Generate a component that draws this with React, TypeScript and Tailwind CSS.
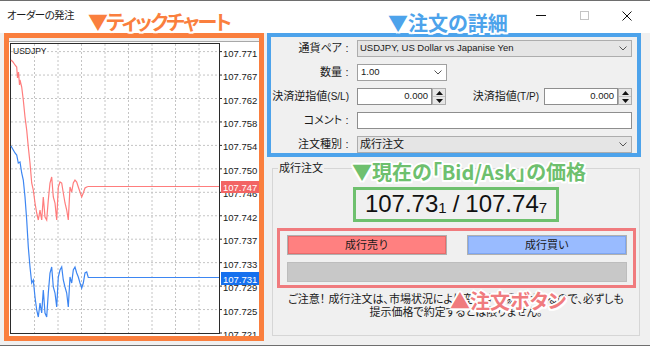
import React from 'react';

// white halo around the annotation captions
const ANNOT =
  "absolute whitespace-nowrap font-['Noto_Sans_CJK_JP',sans-serif] font-bold text-[20px] leading-[22px] [font-feature-settings:'palt'] [text-shadow:2px_0_0_#fff,-2px_0_0_#fff,0_2px_0_#fff,0_-2px_0_#fff,1.5px_1.5px_0_#fff,-1.5px_1.5px_0_#fff,1.5px_-1.5px_0_#fff,-1.5px_-1.5px_0_#fff]";

const PRICES = [
  '107.771', '107.767', '107.762', '107.758', '107.754', '107.750', '107.746',
  '107.742', '107.737', '107.733', '107.729', '107.725', '107.721',
];

const ASK_POINTS: [number, number][] = [
  [11, 60], [13, 62], [15, 65], [16.7, 67], [17.5, 78], [18.5, 72], [19.5, 85], [20, 80],
  [21.7, 87], [23.3, 100], [25, 117], [26.7, 130], [28.3, 147], [30, 163], [31.7, 183],
  [33.3, 190], [35, 203], [36.7, 213], [38.3, 220], [40, 210], [41.7, 220], [43.3, 197],
  [45, 217], [46.7, 220], [48.3, 200], [50, 183], [51.7, 177], [53.3, 197], [55, 203],
  [56.7, 220], [58.3, 187], [60, 182], [61.7, 183], [63.3, 193], [65, 203], [66.7, 210],
  [68.3, 220], [70, 187], [71.7, 192], [73.3, 183], [75, 180], [76.7, 182], [78.3, 187],
  [80, 192], [81.7, 197], [83.3, 193], [85, 188], [86.7, 187], [88.3, 186.5], [219, 186.5],
];

const BID_POINTS: [number, number][] = [
  [11, 146], [13.3, 150], [15, 153], [16.7, 155], [18.3, 163], [20, 162], [21.7, 173],
  [23.3, 180], [25, 197], [26.7, 220], [28.3, 247], [30, 267], [31.7, 283], [33.3, 280],
  [35, 297], [36.7, 310], [38.3, 317], [40, 303], [41.7, 313], [43.3, 290], [45, 313],
  [46.7, 317], [48.3, 293], [50, 273], [51.7, 267], [53.3, 287], [55, 293], [56.7, 307],
  [58.3, 277], [60, 270], [61.7, 267], [63.3, 280], [65, 287], [66.7, 293], [68.3, 307],
  [70, 277], [71.7, 283], [73.3, 270], [75, 267], [76.7, 273], [78.3, 277], [80, 283],
  [81.7, 288], [83.3, 283], [85, 273], [86.7, 272], [88.3, 277.5], [219, 277.5],
];

const toPoints = (pts: [number, number][]) => pts.map(([x, y]) => `${x},${y}`).join(' ');

function TickChart() {
  const gridY = PRICES.map((_, i) => 51.6 + i * 23.45);
  const gridX = Array.from({ length: 8 }, (_, i) => 34.5 + i * 23.5);

  return (
    <svg width="250" height="298" viewBox="9 38 250 298" className="block">
      <rect x="9" y="38" width="250" height="298" fill="#f0f0f0" />
      <rect x="9" y="41" width="250" height="295" fill="#ffffff" />
      <line x1="9" y1="41.5" x2="259" y2="41.5" stroke="#a8a8a8" />

      {gridY.slice(0, 12).map((y) => (
        <line key={y} x1="11" y1={y} x2="219" y2={y} stroke="#c4c4c4" strokeDasharray="2 2" />
      ))}
      {gridX.map((x) => (
        <line key={x} x1={x} y1="44" x2={x} y2="333" stroke="#c4c4c4" strokeDasharray="2 2" />
      ))}
      <rect x="10.5" y="43.5" width="209" height="290" fill="none" stroke="#2b2b2b" />

      {gridY.map((y, i) => (
        <g key={PRICES[i]}>
          <line x1="219" y1={y} x2="222" y2={y} stroke="#2b2b2b" />
          <text x="223" y={y + 1.5} fontSize="9.5" fill="#1a1a1a" dominantBaseline="central" fontFamily="Liberation Sans">
            {PRICES[i]}
          </text>
        </g>
      ))}

      <text x="13" y="50.5" fontSize="8.5" fill="#1a1a1a" dominantBaseline="central" fontFamily="Liberation Sans">
        USDJPY
      </text>

      <polyline points={toPoints(ASK_POINTS)} fill="none" stroke="#ff7d7d" strokeWidth="1.2" />
      <polyline points={toPoints(BID_POINTS)} fill="none" stroke="#3d86f2" strokeWidth="1.2" />

      <rect x="221" y="181" width="38" height="12" fill="#f26464" />
      <text x="223" y="187.5" fontSize="9.5" fill="#ffffff" dominantBaseline="central" fontFamily="Liberation Sans">
        107.747
      </text>
      <rect x="221" y="272" width="38" height="13" fill="#1570ee" />
      <text x="223" y="279" fontSize="9.5" fill="#ffffff" dominantBaseline="central" fontFamily="Liberation Sans">
        107.731
      </text>
    </svg>
  );
}

function Chevron() {
  return (
    <svg width="8" height="5" viewBox="0 0 8 5" className="shrink-0">
      <path d="M0.5 0.5 L4 4 L7.5 0.5" fill="none" stroke="#555" strokeWidth="1" />
    </svg>
  );
}

function Spinner() {
  return (
    <div className="flex h-full w-[14px] shrink-0 flex-col border border-[#adadad] bg-[#e6e6e6]">
      <div className="flex flex-1 items-center justify-center border-b border-[#c4c4c4]">
        <svg width="7" height="4" viewBox="0 0 7 4"><path d="M0 4 L3.5 0 L7 4Z" fill="#111" /></svg>
      </div>
      <div className="flex flex-1 items-center justify-center">
        <svg width="7" height="4" viewBox="0 0 7 4"><path d="M0 0 L7 0 L3.5 4Z" fill="#111" /></svg>
      </div>
    </div>
  );
}

function Label({ children, colon = true }: { children: React.ReactNode; colon?: boolean }) {
  return (
    <div className="flex w-[81px] shrink-0 items-center justify-end text-[11px] [font-feature-settings:'palt']">
      <span>{children}</span>
      {colon ? <span className="w-[10px] text-center">:</span> : <span className="w-[3px]" />}
    </div>
  );
}

export default function App() {
  return (
    <div className="relative flex h-[346px] w-[650px] flex-col overflow-hidden border-y border-[#6e6e6e] bg-[#f0f0f0] font-['Liberation_Sans','Noto_Sans_CJK_JP',sans-serif] text-[#1a1a1a]">
      {/* Title bar */}
      <div className="flex h-[32px] shrink-0 items-center bg-white pb-[3px] pl-[7px] pr-[18px]">
        <span className="text-[10.5px] tracking-[-0.6px] [font-feature-settings:'palt']">オーダーの発注</span>
        <div className="ml-auto h-px w-[10px] bg-[#111]" />
        <div className="ml-[34px] h-[9px] w-[9px] border border-[#c4c4c4]" />
        <svg className="ml-[33px]" width="10" height="10" viewBox="0 0 10 10">
          <path d="M0.5 0.5 L9.5 9.5 M9.5 0.5 L0.5 9.5" stroke="#111" strokeWidth="1" />
        </svg>
      </div>

      <div className="flex flex-1 pl-[4px]">
        {/* Tick chart */}
        <div className="h-[308px] w-[260px] border-[5px] border-[#fa7f3e]">
          <TickChart />
        </div>

        <div className="ml-[3px] flex w-[374px] flex-col">
          {/* Order details */}
          <div className="flex h-[124px] flex-col gap-[7px] border-4 border-[#4da3eb] pr-[5px] pt-[3px]">
            <div className="flex h-[17px] items-center">
              <Label>通貨ペア</Label>
              <div className="ml-[5px] flex h-full flex-1 items-center border border-[#adadad] bg-[#e5e5e5] pl-[2px] pr-[4px]">
                <span className="flex-1 text-[9.5px]">USDJPY, US Dollar vs Japanise Yen</span>
                <Chevron />
              </div>
            </div>
            <div className="flex h-[17px] items-center">
              <Label>数量</Label>
              <div className="ml-[5px] flex h-full w-[90px] items-center border border-[#a0a0a0] bg-white pl-[3px] pr-[4px]">
                <span className="flex-1 text-[9.5px]">1.00</span>
                <Chevron />
              </div>
            </div>
            <div className="flex h-[17px] items-center">
              <Label colon={false}>
                決済逆指値<span className="text-[10px]">(S/L)</span>
              </Label>
              <div className="ml-[5px] flex h-full w-[75px] items-center justify-end border border-[#8e8e8e] bg-white pr-[3px] text-[9.5px]">
                0.000
              </div>
              <Spinner />
              <div className="flex flex-1 justify-end text-[11px]">
                <span>
                  決済指値<span className="text-[10px]">(T/P)</span>
                </span>
              </div>
              <div className="ml-[5px] flex h-full w-[74px] items-center justify-end border border-[#8e8e8e] bg-white pr-[3px] text-[9.5px]">
                0.000
              </div>
              <Spinner />
            </div>
            <div className="flex h-[17px] items-center">
              <Label>コメント</Label>
              <div className="ml-[5px] h-full flex-1 border border-[#8e8e8e] bg-white" />
            </div>
            <div className="flex h-[17px] items-center">
              <Label>注文種別</Label>
              <div className="ml-[5px] flex h-full flex-1 items-center border border-[#adadad] bg-[#e5e5e5] pl-[2px] pr-[4px]">
                <span className="flex-1 text-[11px]">成行注文</span>
                <Chevron />
              </div>
            </div>
          </div>

          {/* Market order group */}
          <fieldset className="ml-[5px] mt-[4px] flex h-[175px] w-[368px] flex-col items-center border border-[#d6d6d6]">
            <legend className="ml-[5px] px-[1px] text-[11px] leading-[14px]">成行注文</legend>
            <div className="mt-[12px] flex h-[35px] w-[206px] items-center justify-center border-[3px] border-[#6ec06e] pb-[1px] text-[#111]">
              <span className="text-[24px] leading-none">107.73</span>
              <span className="mt-[7px] text-[15px] leading-none">1</span>
              <span className="px-[6px] text-[24px] leading-none">/</span>
              <span className="text-[24px] leading-none">107.74</span>
              <span className="mt-[7px] text-[15px] leading-none">7</span>
            </div>
            <div className="ml-[4px] mt-[6px] flex h-[60px] w-[359px] flex-col self-start border-[3px] border-[#f07b7e] pl-[7px] pr-[6px] pt-[4px]">
              <div className="flex justify-between">
                <div className="flex h-[20px] w-[160px] items-center justify-center border border-[#b0b0b0] bg-[#ff8080] text-[11px] shadow-[inset_0_0_0_1px_#e86b6b]">
                  成行売り
                </div>
                <div className="flex h-[20px] w-[160px] items-center justify-center border border-[#b0b0b0] bg-[#99bbff] text-[11px] shadow-[inset_0_0_0_1px_#7ea6f2]">
                  成行買い
                </div>
              </div>
              <div className="mt-[7px] h-[20px] border border-[#bdbdbd] bg-[#c8c8c8]" />
            </div>
            <p className="mt-[5px] text-center text-[11px] leading-[13px] [font-feature-settings:'palt']">
              ご注意！ 成行注文は、市場状況により変動する場合があるので、必ずしも
              <br />
              提示価格で約定するとは限りません。
            </p>
          </fieldset>
        </div>
      </div>

      {/* Annotations */}
      <div className={`${ANNOT} left-[88px] top-[10px] tracking-[-2px] text-[#fa7f3e]`}>▼ティックチャート</div>
      <div className={`${ANNOT} left-[388px] top-[11px] text-[#4da3eb]`}>▼注文の詳細</div>
      <div className={`${ANNOT} left-[352px] top-[160px] text-[#6ec06e]`}>▼現在の「Bid/Ask」の価格</div>
      <div className={`${ANNOT} left-[450px] top-[289px] text-[#f07b7e]`}>▲注文ボタン</div>
    </div>
  );
}
